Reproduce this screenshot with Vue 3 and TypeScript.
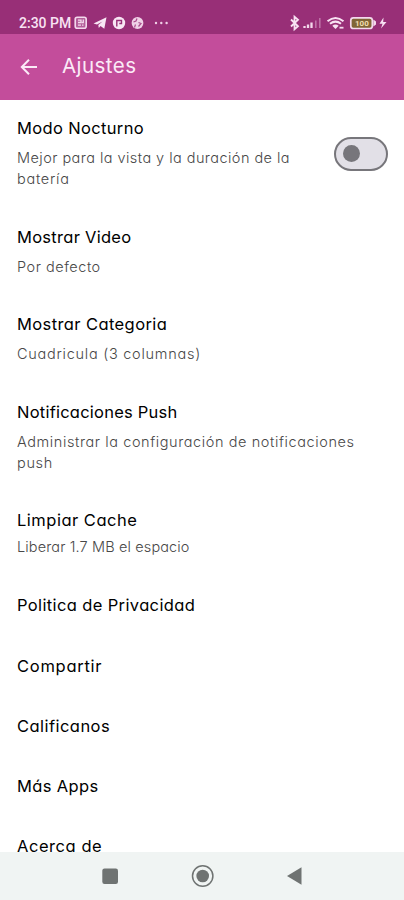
<script setup lang="ts">
import { ref } from 'vue'

interface Line { text: string; spacing: number }
interface Item { title: Line; desc?: Line[]; toggle?: boolean; tight?: boolean }

const night = ref(false)

const items: Item[] = [
  {
    title: { text: 'Modo Nocturno', spacing: 0.35 },
    desc: [
      { text: 'Mejor para la vista y la duración de la', spacing: 0.45 },
      { text: 'batería', spacing: 0.72 },
    ],
    toggle: true,
  },
  { title: { text: 'Mostrar Video', spacing: 0.28 }, desc: [{ text: 'Por defecto', spacing: 0.52 }] },
  { title: { text: 'Mostrar Categoria', spacing: 0.4 }, desc: [{ text: 'Cuadricula (3 columnas)', spacing: 0.73 }] },
  {
    title: { text: 'Notificaciones Push', spacing: 0.23 },
    desc: [
      { text: 'Administrar la configuración de notificaciones', spacing: 0.59 },
      { text: 'push', spacing: 0.67 },
    ],
  },
  { title: { text: 'Limpiar Cache', spacing: 0.5 }, desc: [{ text: 'Liberar 1.7 MB el espacio', spacing: 0.13 }], tight: true },
  { title: { text: 'Politica de Privacidad', spacing: 0.37 } },
  { title: { text: 'Compartir', spacing: 0.72 } },
  { title: { text: 'Calificanos', spacing: 0.45 } },
  { title: { text: 'Más Apps', spacing: 0.36 } },
  { title: { text: 'Acerca de', spacing: 0.56 } },
]
</script>

<template>
  <div class="screen">
    <header class="status">
      <div class="status-left">
        <span class="clock">2:30 PM</span>
        <svg width="98" height="18" viewBox="0 0 98 18">
          <rect x="1.2" y="3.2" width="11" height="11" rx="2" fill="#e9b9dc" fill-opacity=".35" stroke="#f3d9ec" stroke-width="1.6" />
          <path d="M4 6.2h3v2.3H4M4 11.2h3M9.3 5.5v3H7.8M9.5 11.2H8" fill="none" stroke="#f3d9ec" stroke-width="1.3" />
          <path d="M19.500 9.500 32.500 3.300 30.300 14.800 26.500 12 24.800 14 24.300 11 28.500 7.500 23 10.500Z" fill="#f8e6f4" />
          <circle cx="45" cy="9" r="6.2" fill="#f8e6f4" />
          <path d="M42.800 12.500V6.500h4.700v3h-2.200" fill="none" stroke="#982f77" stroke-width="1.4" />
          <circle cx="63.500" cy="9" r="5.900" fill="#f0d0e7" />
          <path d="M59.500 8l2.500-1 1-2.500M60.500 13.500l1-3M64.500 8.500l2.500 1-2.500 3" fill="none" stroke="#a84a8b" stroke-width="1.2" />
          <circle cx="82" cy="9" r="1.2" fill="#f0d0e7" />
          <circle cx="87.300" cy="9" r="1.2" fill="#f0d0e7" />
          <circle cx="92.600" cy="9" r="1.2" fill="#f0d0e7" />
        </svg>
      </div>
      <svg width="100" height="18" viewBox="0 0 100 18">
        <path d="M2 5.500 9 12.300 5.500 15.300V2.700L9 5.700 2 12.500" fill="none" stroke="#f8e2f3" stroke-width="1.8" />
        <path d="M15.500 14v-2M19 14v-3.500M22.500 14V8.500" stroke="#f3d9ec" stroke-width="2.3" />
        <path d="M26.800 14V6.500M30.800 14V4" stroke="#bd72a7" stroke-width="1.6" />
        <path d="M38.500 7.300Q46.500.8 54.500 7.300M41 9.800Q46.500 5.500 52 9.800" fill="none" stroke="#f8e2f3" stroke-width="2" />
        <path d="M43.300 11.700Q46.500 9.300 49.700 11.700L46.500 15Z" fill="#f8e2f3" />
        <path d="M50.500 13.700h4" stroke="#f3d9ec" stroke-width="1.8" />
        <rect x="61.800" y="3.800" width="21.500" height="10.700" rx="2.5" fill="#806536" stroke="#f3d9ec" stroke-width="1.7" />
        <path d="M84.300 5.500 87 7.500v3l-2.700 2Z" fill="#f3d9ec" />
        <text x="66" y="12" class="battery">100</text>
        <path d="M94.500 3.500 90.500 9.800h3L92 14.500 97.500 8h-3.300Z" fill="#f8e2f3" />
      </svg>
    </header>

    <div class="bar">
      <svg width="18" height="18" viewBox="0 0 18 18">
        <path d="M17 9H2.200M9 1.800 1.800 9 9 16.200" fill="none" stroke="#fbeaf7" stroke-width="2" />
      </svg>
      <h1 class="heading">Ajustes</h1>
    </div>

    <main class="list">
      <section v-for="item in items" :key="item.title.text" class="item" :class="{ tight: item.tight }">
        <div>
          <div class="title" :style="{ letterSpacing: item.title.spacing + 'px' }">{{ item.title.text }}</div>
          <div v-if="item.desc" class="desc">
            <div v-for="line in item.desc" :key="line.text" :style="{ letterSpacing: line.spacing + 'px' }">{{ line.text }}</div>
          </div>
        </div>
        <div v-if="item.toggle" class="switch" :class="{ on: night }" @click="night = !night"><i class="thumb"></i></div>
      </section>
    </main>

    <nav class="nav">
      <svg width="404" height="48" viewBox="0 0 404 48">
        <rect x="102.300" y="16.500" width="15.700" height="15.500" rx="2.2" fill="#6f7372" />
        <circle cx="202.700" cy="24" r="10.2" fill="none" stroke="#6f7372" stroke-width="1.5" />
        <circle cx="202.700" cy="24" r="6.3" fill="#6f7372" />
        <path d="M287 24 301.500 15.200V32.800Z" fill="#6f7372" />
      </svg>
    </nav>
  </div>
</template>

<style>
body { margin: 0; }
</style>
<style scoped>
.screen { width: 404px; height: 900px; display: flex; flex-direction: column; overflow: hidden; background: #fff; font-family: Inter, "Liberation Sans", sans-serif; font-feature-settings: "cv11"; }
.status { height: 34px; flex: none; box-sizing: border-box; padding: 14px 15px 0 19px; display: flex; justify-content: space-between; background: #982f77; }
.status-left { display: flex; gap: 3px; }
.clock { width: 52px; font-family: Roboto, sans-serif; font-size: 14px; font-weight: 500; line-height: 18px; color: #f8e2f3; white-space: nowrap; }
.battery { font: bold 8px Roboto, sans-serif; fill: #f2dfb0; }
.bar { height: 66px; flex: none; display: flex; align-items: center; gap: 24px; box-sizing: border-box; padding: 0 20px; background: #c34d9b; }
.heading { margin: 0; padding-bottom: 3px; font-size: 20.5px; font-weight: 400; line-height: 30px; letter-spacing: 0.45px; color: #fbeaf7; }
.list { flex: 1; min-height: 0; overflow: hidden; }
.item { display: flex; justify-content: space-between; align-items: center; padding: 16.3px 16px 20px 17px; white-space: nowrap; }
.title { font-size: 16.5px; font-weight: 400; line-height: 24px; color: #000; }
.desc { margin: 8px 0 -1px; font-size: 14.5px; font-weight: 300; line-height: 20.5px; color: #484848; }
.tight .desc { margin-top: 5px; }
.switch { width: 54px; height: 34px; margin-top: 3px; box-sizing: border-box; border: 2px solid #77767b; border-radius: 17px; background: #e2e0e7; display: flex; align-items: center; padding: 0 7px; }
.switch.on { justify-content: flex-end; }
.thumb { width: 17px; height: 17px; border-radius: 50%; background: #77767b; }
.nav { height: 48px; flex: none; background: #f0f4f3; }
.nav svg { display: block; }
</style>
